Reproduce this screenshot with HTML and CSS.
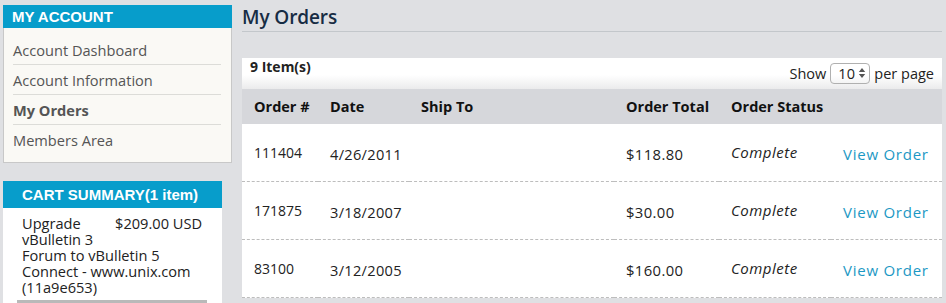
FILE: index.html
```html
<!DOCTYPE html>
<html>
<head>
<meta charset="utf-8">
<link rel="stylesheet" href="styles.css">
</head>
<body>
<div class="page">
  <aside class="sidebar">
    <div class="account-box">
      <div class="box-title">MY ACCOUNT</div>
      <ul class="account-nav">
        <li>Account Dashboard</li>
        <li>Account Information</li>
        <li class="current">My Orders</li>
        <li>Members Area</li>
      </ul>
    </div>
    <div class="cart-box">
      <div class="box-title cart-title">CART SUMMARY(1 item)</div>
      <div class="cart-body">
        <div class="cart-item">
          <span class="cart-price">$209.00 USD</span>
          <span class="cart-name">Upgrade vBulletin 3 Forum to vBulletin 5 Connect - www.unix.com (11a9e653)</span>
        </div>
        <div class="cart-rule"></div>
      </div>
    </div>
  </aside>
  <main class="main">
    <h1 class="page-title">My Orders</h1>
    <div class="orders">
      <div class="toolbar">
        <div class="count">9 Item(s)</div>
        <div class="limiter">
          <span>Show</span>
          <span class="select">10
            <svg class="spin" width="8" height="12" viewBox="0 0 8 12"><path d="M4 1 L7.2 5 H0.8 Z M4 11 L7.2 7 H0.8 Z" fill="#555"/></svg>
          </span>
          <span>per page</span>
        </div>
      </div>
      <table class="orders-table">
        <colgroup>
          <col class="c1"><col class="c2"><col class="c3"><col class="c4"><col class="c5"><col class="c6">
        </colgroup>
        <thead>
          <tr><th>Order #</th><th>Date</th><th>Ship To</th><th>Order Total</th><th>Order Status</th><th></th></tr>
        </thead>
        <tbody>
          <tr><td class="num">111404</td><td class="date">4/26/2011</td><td></td><td class="total">$118.80</td><td class="status">Complete</td><td class="action"><a class="view">View Order</a></td></tr>
          <tr><td class="num">171875</td><td class="date">3/18/2007</td><td></td><td class="total">$30.00</td><td class="status">Complete</td><td class="action"><a class="view">View Order</a></td></tr>
          <tr><td class="num">83100</td><td class="date">3/12/2005</td><td></td><td class="total">$160.00</td><td class="status">Complete</td><td class="action"><a class="view">View Order</a></td></tr>
        </tbody>
      </table>
    </div>
  </main>
</div>
</body>
</html>
```

FILE: styles.css
```css
html, body {
  margin: 0;
  padding: 0;
}
body {
  background: #dfe0e3;
  font-family: "Open Sans", "Noto Sans", sans-serif;
  color: #222;
  height: 303px;
  overflow: hidden;
}
.page {
  display: flex;
  align-items: flex-start;
}
.sidebar {
  width: 229px;
  margin: 5px 0 0 3px;
  flex: none;
}
.account-box {
  background: #faf9f5;
  border: 1px solid #c8c8c8;
  border-top: none;
}
.box-title {
  background: #079dcb;
  color: #fff;
  font-family: "Liberation Sans", Arial, sans-serif;
  font-weight: bold;
  font-size: 15px;
  height: 23px;
  line-height: 23px;
  padding-left: 9px;
  margin: 0 -1px;
}
.account-nav {
  list-style: none;
  margin: 0;
  padding: 7px 10px 7px 9px;
}
.account-nav li {
  height: 30px;
  line-height: 30px;
  border-bottom: 1px solid #dcdcd8;
  font-size: 14.6px;
  color: #555;
  box-sizing: border-box;
}
.account-nav li:last-child {
  border-bottom: none;
}
.account-nav li.current {
  font-weight: bold;
}
.cart-box {
  margin-top: 18px;
  width: 219px;
  background: #fff;
}
.cart-title {
  height: 27px;
  line-height: 27px;
  padding-left: 19px;
  margin: 0;
}
.cart-body {
  padding: 7px 20px 0 19px;
}
.cart-item {
  font-size: 14.6px;
  line-height: 16px;
  color: #222;
  height: 85px;
}
.cart-price {
  float: right;
  height: 32px;
  margin-left: 6px;
}
.cart-rule {
  height: 3px;
  background: #b9b9b9;
  margin: 0 -5px;
}
.main {
  margin-left: 10px;
  width: 700px;
  flex: none;
}
.page-title {
  margin: 0;
  font-size: 19px;
  font-weight: 600;
  color: #172c44;
  height: 32px;
  line-height: 35px;
  border-bottom: 1px solid #c3c7cb;
  box-sizing: border-box;
  letter-spacing: -0.1px;
}
.orders {
  margin-top: 26px;
  background: #fff;
}
.toolbar {
  height: 31px;
  display: flex;
  justify-content: space-between;
  background: linear-gradient(#fff 55%, #ebebec);
  padding: 0 8px;
}
.count {
  font-size: 14px;
  font-weight: bold;
  line-height: 18px;
  color: #222;
}
.limiter {
  display: flex;
  align-items: center;
  gap: 4px;
  font-size: 14.5px;
  color: #222;
  height: 30px;
}
.select {
  display: inline-flex;
  align-items: center;
  gap: 3px;
  height: 19px;
  width: 28px;
  padding: 0 3px 0 7px;
  border: 1px solid #b0b0b0;
  border-radius: 4px;
  font-size: 14.5px;
}
.orders-table {
  width: 700px;
  border-collapse: collapse;
  table-layout: fixed;
}
.c1 { width: 76px; }
.c2 { width: 91px; }
.c3 { width: 205px; }
.c4 { width: 105px; }
.c5 { width: 112px; }
.c6 { width: 111px; }
.orders-table th {
  background: #d6d7db;
  height: 35px;
  text-align: left;
  font-size: 14.5px;
  font-weight: bold;
  color: #111;
  padding: 0 0 0 12px;
  white-space: nowrap;
}
.orders-table td {
  height: 57px;
  padding: 0 0 0 12px;
  font-size: 14px;
  color: #222;
  border-bottom: 1px dashed #bdbdbd;
  vertical-align: middle;
  white-space: nowrap;
}
.orders-table td.date {
  font-size: 14.6px;
  letter-spacing: 0.3px;
  padding-top: 3px;
  height: 54px;
}
.orders-table td.total {
  font-size: 14.8px;
  letter-spacing: 0.4px;
  padding-top: 3px;
  height: 54px;
}
.orders-table td.status {
  font-size: 15px;
  letter-spacing: 0.5px;
  font-style: italic;
  padding-bottom: 2px;
  height: 55px;
}
.orders-table td.action {
  font-size: 15px;
  letter-spacing: 0.75px;
  padding-top: 3px;
  height: 54px;
}
.view {
  color: #1c98c4;
  text-decoration: none;
}
```
